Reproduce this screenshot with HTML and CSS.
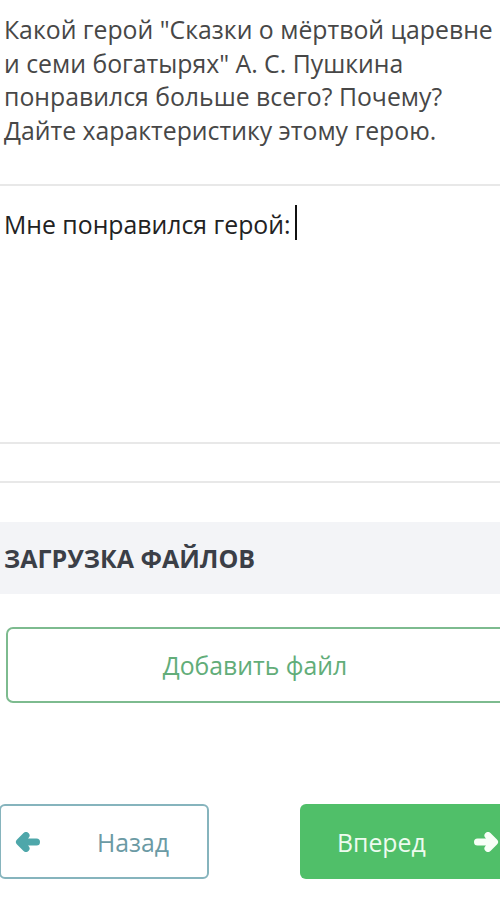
FILE: index.html
```html
<!DOCTYPE html>
<html lang="ru">
<head>
    <meta charset="UTF-8">
    <meta name="viewport" content="width=device-width, initial-scale=1.0">
    <title>Вопрос</title>
    <link rel="stylesheet" href="styles.css">
</head>
<body>
    <div id="page">
        <div class="question">
            Какой герой "Сказки о мёртвой царевне и семи богатырях" А. С. Пушкина понравился больше всего? Почему? Дайте характеристику этому герою.
        </div>

        <div class="answer">
            <span>Мне понравился герой:</span><span class="caret"></span>
        </div>

        <div class="spacer"></div>

        <div class="section-title">ЗАГРУЗКА ФАЙЛОВ</div>

        <div class="upload">
            <button class="add-file">Добавить файл</button>
        </div>

        <div class="nav">
            <button class="btn-back">
                <svg class="arrow" viewBox="0 0 26 20" width="26" height="20">
                    <path d="M21.5 10H5M11 3.5L4.5 10L11 16.5" fill="none" stroke="currentColor" stroke-width="7" stroke-linecap="round" stroke-linejoin="round"/>
                </svg>
                <span>Назад</span>
            </button>
            <button class="btn-next">
                <span>Вперед</span>
                <svg class="arrow" viewBox="0 0 26 20" width="26" height="20">
                    <path d="M4.5 10H21M15 3.5L21.5 10L15 16.5" fill="none" stroke="currentColor" stroke-width="7" stroke-linecap="round" stroke-linejoin="round"/>
                </svg>
            </button>
        </div>
    </div>
</body>
</html>
```

FILE: styles.css
```css
html, body {
    margin: 0;
    padding: 0;
    background-color: #fff;
}

body {
    font-family: "Open Sans", "Noto Sans", sans-serif;
}

#page {
    width: 500px;
    overflow: hidden;
}

.question {
    width: 500px;
    padding: 13px 0 0 4px;
    font-size: 24.8px;
    line-height: 33.5px;
    color: #474747;
    height: 171px;
    border-bottom: 2px solid #e8e8e8;
}

.answer {
    padding: 22px 0 0 4px;
    height: 234px;
    font-size: 24.8px;
    line-height: 32px;
    color: #222;
    border-bottom: 2px solid #e8e8e8;
    display: flex;
    align-items: flex-start;
}

.caret {
    display: inline-block;
    width: 2px;
    height: 35px;
    margin: -3px 0 0 4px;
    background-color: #111;
}

.spacer {
    height: 37px;
    border-bottom: 2px solid #e8e8e8;
}

.section-title {
    margin-top: 39px;
    height: 72px;
    padding-left: 4px;
    display: flex;
    align-items: center;
    background-color: #f3f4f7;
    font-size: 25px;
    font-weight: 700;
    color: #3b3f47;
}

.upload {
    padding: 33px 0 0 6px;
}

.add-file {
    width: 510px;
    height: 76px;
    border: 2px solid #7dbb8f;
    border-radius: 7px;
    background-color: #fff;
    font-family: inherit;
    font-size: 24.8px;
    color: #62ad79;
    padding: 0 12px 0 0;
}

.nav {
    margin-top: 101px;
    display: flex;
    gap: 91px;
}

.btn-back,
.btn-next {
    flex-shrink: 0;
    height: 75px;
    border-radius: 6px;
    font-family: inherit;
    font-size: 24.8px;
    display: flex;
    align-items: center;
    padding: 0;
}

.btn-back {
    width: 210px;
    margin-left: -1px;
    border: 2px solid #86b4bd;
    background-color: #fff;
    color: #6b9aa4;
}

.btn-back .arrow {
    color: #4ea7aa;
    margin-left: 14px;
    margin-right: 56px;
}

.btn-next {
    width: 230px;
    border: none;
    background-color: #50bf69;
    color: #eefbef;
}

.btn-next span {
    margin-left: 37px;
}

.btn-next .arrow {
    color: #f7fff7;
    margin-left: 47px;
}
```
